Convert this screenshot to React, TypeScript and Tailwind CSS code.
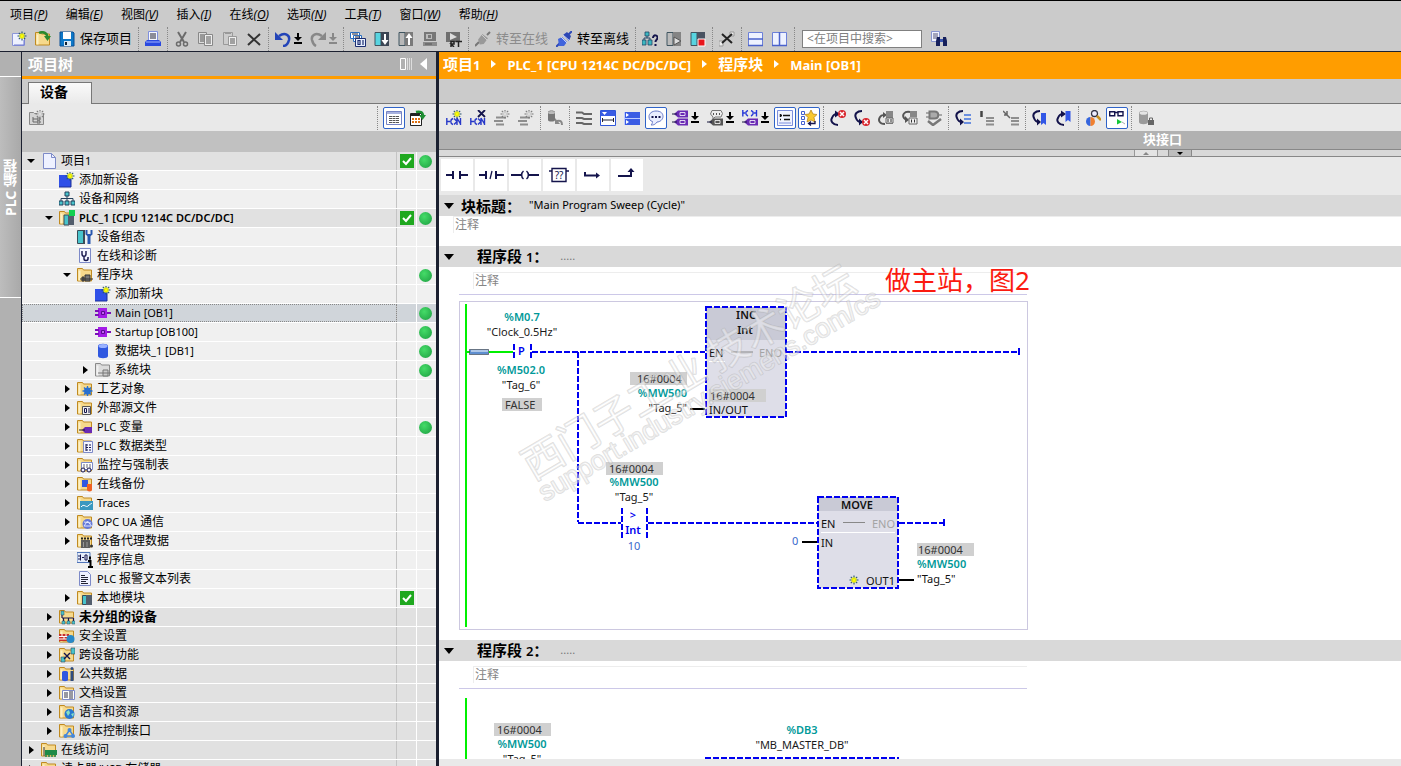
import type { ReactNode } from "react";
import clsx from "clsx";

/* ---------- small shared pieces ---------- */

function Svg({ children, size = 16 }: { children: ReactNode; size?: number }) {
  return (
    <svg width={size} height={size} viewBox="0 0 16 16" fill="none" className="block shrink-0" aria-hidden="true">
      {children}
    </svg>
  );
}

function Spark({ x, y, gray }: { x: number; y: number; gray?: boolean }) {
  return (
    <g transform={`translate(${x} ${y})`}>
      <path d="M0-4.5V4.5M-4.5 0H4.5M-3.2-3.2 3.2 3.2M3.2-3.2-3.2 3.2" stroke={gray ? "#777" : "#24506e"} strokeWidth="1.1" />
      <path d="M0-3V3M-3 0H3M-2.2-2.2 2.2 2.2M2.2-2.2-2.2 2.2" stroke={gray ? "#ddd" : "#ff0"} strokeWidth="1.1" />
    </g>
  );
}

function Folder({ gray, children }: { gray?: boolean; children?: ReactNode }) {
  return (
    <Svg>
      <path d="M.5 1.500h5l1 1.500h8v11H.5z" fill={gray ? "#dcdcdc" : "#f6d98c"} stroke={gray ? "#8a8a8a" : "#c08a20"} />
      <path d="M1.500 3.500h2v10h-2z" fill={gray ? "#f2f2f2" : "#fdf0c4"} />
      {children}
    </Svg>
  );
}

function Split({ text, latin }: { text: string; latin: string }) {
  return (
    <>
      {text.split(/([\u0021-\u007e][\u0020-\u007e]*)/).map((part, i) => (
        <span key={i} className={i % 2 ? latin : undefined}>{part}</span>
      ))}
    </>
  );
}

/* ---------- tool bar icons ---------- */

const contactPair = (
  <path d="M.8 8v7M1 11.500h3M7 8.500c-3 1-3 5 0 6M8 8.500l3 3-3 3M11 8v7M14.500 8v7M11 8l3.500 6" stroke="#2738c8" strokeWidth="1.400" />
);
const grayLines = <path d="M2 7.500h10M0 11h9M2 14.500h8" stroke="#8e8e8e" strokeWidth="2" />;
const curveDown = <path d="M8 1C3 1 0 4 2 8c1 3 3 4 5 4" stroke="#12124a" strokeWidth="2" />;
const jumpDown = (
  <>
    {curveDown}
    <path d="M5 8.500v7l4-3.500z" fill="#12124a" />
  </>
);
const jumpUp = (
  <>
    <path d="M8 15C3 15 0 11 2 8c1-3 3-4 5-4" stroke="#12124a" strokeWidth="2" />
    <path d="M5 .5v7L10 4z" fill="#12124a" />
  </>
);
const redCross = (x: number, y: number) => (
  <g transform={`translate(${x} ${y})`}>
    <circle r="4" fill="#d8242c" />
    <path d="M-2-2 2 2M2-2-2 2" stroke="#fff" strokeWidth="1.5" />
  </g>
);
const tagShape = (y: number, color: string) => (
  <>
    <path d={`M2 ${y}l4-3.500h10v7H6z`} fill={color} />
    <path d={`M0 ${y}h5`} stroke="#1a1a40" />
    <path d={`M8 ${y - 1.500}h5v3H8z`} stroke="#fff" strokeWidth=".8" />
  </>
);
const device = (x: number, light: string, dark: string) => (
  <>
    <path d={`M${x} 1.500h6v13H${x}z`} fill={light} stroke="#3f5560" />
    <path d={`M${x + 6} 1h8v14h-8z`} fill={dark} />
  </>
);

const icons: Record<string, ReactNode> = {
  new: (
    <Svg>
      <path d="M1.500 2.500h9l3 2v10h-12z" fill="#eef1ff" stroke="#8c96d8" />
      <path d="M13 9v5H3" stroke="#6f79d0" />
      <Spark x={11} y={5} />
    </Svg>
  ),
  open: (
    <Folder>
      <path d="M4 2c4-2 8 0 8.500 4" stroke="#2c8a2c" strokeWidth="2.500" />
      <path d="M9 5h7l-3.500 5z" fill="#2c8a2c" />
    </Folder>
  ),
  save: (
    <Svg>
      <path d="M1 1h13l1 1v13H1z" fill="#0d78c8" stroke="#0b4f94" />
      <path d="M4 1h8v7H4z" fill="#fff" />
      <path d="M5 10h7v5H5z" fill="#d7e8f5" />
      <path d="M6 11h2v3H6z" fill="#123" />
    </Svg>
  ),
  print: (
    <Svg>
      <path d="M3.500.5h9v9h-9z" fill="#f6f8ff" stroke="#8090dd" />
      <path d="M5 3h6M5 5h6M5 7h6" stroke="#223" />
      <path d="M0 11l2-2h12l2 2v4H0z" fill="#2a49e0" />
      <path d="M1 11h14" stroke="#9fb2ff" />
    </Svg>
  ),
  cut: (
    <Svg>
      <path d="M4 1l6 10M12 1L6 11" stroke="#6b6b6b" strokeWidth="2" />
      <circle cx="4.500" cy="13" r="2" stroke="#6b6b6b" strokeWidth="1.500" />
      <circle cx="11.500" cy="13" r="2" stroke="#6b6b6b" strokeWidth="1.500" />
    </Svg>
  ),
  copy: (
    <Svg>
      <path d="M.5 1.500h8v11h-8z" fill="#ddd" stroke="#888" />
      <path d="M6.500 3.500h8v11h-8z" fill="#eee" stroke="#888" />
      <path d="M2 4h4M2 6h4M2 8h4M2 10h4M8 6h5M8 8h5M8 10h5M8 12h5" stroke="#555" />
    </Svg>
  ),
  paste: (
    <Svg>
      <path d="M1.500 1.500h9v12h-9z" fill="#ccc" stroke="#999" />
      <path d="M3 1h6v2H3z" fill="#999" />
      <path d="M6.500 5.500h8v9h-8z" fill="#eee" stroke="#999" />
      <path d="M8 8h5M8 10h5M8 12h5" stroke="#555" />
    </Svg>
  ),
  remove: <Svg><path d="M2 3l12 11M14 3L2 14" stroke="#333" strokeWidth="2" /></Svg>,
  undo: (
    <Svg>
      <path d="M4 5c6-4 11-1 10 4-1 4-3 6-6 6" stroke="#2344b8" strokeWidth="2.500" />
      <path d="M0 1v8h8z" fill="#2344b8" />
    </Svg>
  ),
  redo: (
    <Svg>
      <path d="M12 5C6 1 1 4 2 9c1 4 2 5 4 6" stroke="#888" strokeWidth="2.500" />
      <path d="M16 1v8H8z" fill="#888" />
    </Svg>
  ),
  compile: (
    <Svg>
      <path d="M.5 1.500h9v6h-9zM3.500 4.500h8v6h-8z" fill="#fff" stroke="#2a6ec0" />
      <path d="M2 3h6M5 6h5" stroke="#223" />
      <path d="M5.500 7.500h10v8h-10z" fill="#e8f0ff" stroke="#1b2d70" />
      <path d="M8 9.500h2v4H8zM13 9v5" stroke="#1b2d70" strokeWidth="1.200" />
    </Svg>
  ),
  download: <Svg>{device(1, "#58d4e0", "#3c4654")}<path d="M11 3v8" stroke="#fff" strokeWidth="2" /><path d="M7.500 9h7L11 14z" fill="#fff" /></Svg>,
  upload: <Svg>{device(1, "#b8b8b8", "#7a7a7a")}<path d="M11 6v8" stroke="#fff" strokeWidth="2" /><path d="M7.500 7h7L11 2z" fill="#fff" /></Svg>,
  simulate: (
    <Svg>
      <path d="M2 1h12v9H2z" fill="#777" />
      <path d="M4 3h6v5H4z" fill="#bbb" />
      <path d="M6 4h3v3H6z" fill="#777" />
      <path d="M1 11h14v4H1z" fill="#8b8b8b" />
      <path d="M3 13h7" stroke="#555" />
    </Svg>
  ),
  runtime: (
    <Svg>
      <path d="M0 1h14v10H0z" fill="#6f6f6f" />
      <path d="M4 2l7 4-7 3z" fill="#ddd" />
      <path d="M5 16v-5.500h3v2.500H5l3 3M9.500 10.500H16M12.500 10v6" stroke="#222" strokeWidth="1.500" />
    </Svg>
  ),
  plugGray: (
    <Svg>
      <path d="M0 15l4-4M12 4l3-3" stroke="#777" strokeWidth="2" />
      <path d="M3 8l5-5 5 5-5 5H4z" fill="#999" transform="rotate(-8 8 8)" />
      <path d="M6 3l7 7" stroke="#ccc" />
    </Svg>
  ),
  plug: (
    <Svg>
      <path d="M0 16l4-4M12 4l4-4" stroke="#2d48b8" strokeWidth="2" />
      <path d="M2 8l4-2 5 5-3 4H3z" fill="#4164dc" />
      <path d="M7 4l4-3 4 4-2 5z" fill="#2c46b4" />
      <path d="M5 6l6 6M7 4l7 6" stroke="#c4d2ff" />
    </Svg>
  ),
  accessible: (
    <Svg>
      <path d="M3 1h4v4H3zM0 9h4v5H0zM6 9h4v5H6z" fill="#3cb8c0" stroke="#246" strokeWidth=".8" />
      <path d="M5 5v2M2 9V7h6v2" stroke="#246" />
      <path d="M11 7c0-4 5-3 4.500 0-.3 2-2 2-2 4M13.500 13v2" stroke="#14144c" strokeWidth="2" />
    </Svg>
  ),
  start: <Svg>{device(1, "#bbb", "#848484")}<path d="M8 6l7 4-7 4z" fill="#ddd" stroke="#555" /></Svg>,
  stop: <Svg>{device(1, "#58d4e0", "#4a5362")}<path d="M8 8h7v7H8z" fill="#e8161c" stroke="#fff" /></Svg>,
  crossRef: (
    <Svg>
      <path d="M0 10h4v5H0zM11 1h4v4h-4z" fill="#eee" stroke="#999" />
      <path d="M3 3l10 9M13 3L3 12" stroke="#222" strokeWidth="2" />
    </Svg>
  ),
  splitH: <Svg><path d="M.5 1.500h14v13H.5z" fill="#eef2ff" stroke="#6c80d8" /><path d="M0 8h15M0 14.500h15" stroke="#4a62cc" strokeWidth="1.500" /></Svg>,
  splitV: <Svg><path d="M.5 1.500h14v13H.5z" fill="#eef2ff" stroke="#6c80d8" /><path d="M7.500 1v14M0 14.500h15" stroke="#4a62cc" strokeWidth="1.500" /></Svg>,
  find: (
    <Svg>
      <path d="M.5.5h8v10h-8z" fill="#f2f4ff" stroke="#8a96d0" />
      <path d="M2 3h5M2 5h5M2 7h4" stroke="#557" />
      <path d="M6 6h3v9H5v-5zM12 6h3l1 4v5h-4z" fill="#16205c" />
      <path d="M9 8h3v3H9z" fill="#3a56b0" />
    </Svg>
  ),

  insertNetwork: <Svg>{contactPair}<Spark x={11} y={4} /></Svg>,
  deleteNetwork: <Svg>{contactPair}<path d="M8 0l7 7M15 0L8 7" stroke="#14144c" strokeWidth="1.800" /></Svg>,
  rowGray: <Svg>{grayLines}<Spark x={11} y={4} gray /></Svg>,
  dbReset: (
    <Svg>
      <path d="M1 2c0-2 7-2 7 0v8c0 2-7 2-7 0z" fill="#777" />
      <ellipse cx="4.500" cy="2.500" rx="3.500" ry="1.500" fill="#bbb" />
      <path d="M10 11c3-1 5 0 5 4" stroke="#888" strokeWidth="2" />
      <path d="M8 8v6h5z" fill="#888" />
    </Svg>
  ),
  levels: <Svg><path d="M0 2.500h6l2 1.500h8M0 8h6l2 1h8M0 13h6l2 1h8" stroke="#666" strokeWidth="2" /></Svg>,
  expandAll: (
    <Svg>
      <path d="M.5 .5h15v15H.5z" fill="#fff" stroke="#3157d8" />
      <path d="M1 1h14v5H1z" fill="#3a5ce4" />
      <path d="M2 2h5L4.500 5z" fill="#fff" />
      <path d="M3 10h10M2.500 8v4M13.500 8v4" stroke="#223" />
    </Svg>
  ),
  collapseAll: (
    <Svg>
      <path d="M0 2h16v6H0zM0 9h16v6H0z" fill="#3a5ce4" />
      <path d="M0 8.500h16M.5 2v13" stroke="#bccaff" />
      <path d="M2 3l3 2-3 2zM2 10l3 2-3 2z" fill="#fff" />
    </Svg>
  ),
  comment: (
    <Svg>
      <path d="M8 1c5 0 7 2.500 7 5.500S12 12 9 12C7 15 5 15 3 15c1-1 1.500-2 1.500-3.500C2 11 1 9 1 6.500 1 3.500 4 1 8 1z" fill="#e9edff" stroke="#6678c8" />
      <path d="M3.500 7h2M7 7h2M10.500 7h2" stroke="#14144c" strokeWidth="2" />
    </Svg>
  ),
  operands: <Svg>{tagShape(4, "#6a2ab4")}{tagShape(12, "#6a2ab4")}</Svg>,
  bubbleTag: (
    <Svg>
      {tagShape(12, "#555")}
      <path d="M5 .5h9l1.500 3L14 7H8l-2 2V7L3.500 4z" fill="#eee" stroke="#777" />
      <path d="M6 4h1M9 4h1M12 4h1" stroke="#222" strokeWidth="1.500" />
    </Svg>
  ),
  contactTag: (
    <Svg>
      <path d="M.8 0v6.500M1 3h2M6 .5c-3 1-3 4 0 5.500M9 .5c3 1 3 4 0 5.500M14.500 0v6.500M12 3h2" stroke="#2738d8" strokeWidth="1.400" />
      {tagShape(12, "#6a2ab4")}
    </Svg>
  ),
  freeForm: (
    <Svg>
      <path d="M.5.5h15v15H.5z" fill="#f1f4ff" stroke="#7d8fdc" />
      <path d="M3 5.500h2M3 9.500h1M6 5.500h7M7 9.500h6M3.500 4v3" stroke="#111" strokeWidth="1.500" />
      <path d="M2 13h12" stroke="#7d8fdc" />
    </Svg>
  ),
  favorites: (
    <Svg>
      <path d="M.5 1.500h3v3h-3zM.5 6.500h3v3h-3zM.5 11.500h3v3h-3z" stroke="#4460d0" />
      <path d="M10 0l2 4 4 .5-3 3 1 4.500-4-2-4 2 1-4.500-3-3L8 4z" fill="#f8c830" stroke="#b07c10" strokeWidth=".7" />
      <path d="M14 11v2.500H8M10 11.500L7.500 13.500l2.500 2" stroke="#14144c" strokeWidth="1.300" />
    </Svg>
  ),
  nextError: <Svg>{jumpUp}{redCross(12, 4)}</Svg>,
  prevError: <Svg>{jumpDown}{redCross(12, 12)}</Svg>,
  blockUp: (
    <Svg>
      <path d="M7 14C1 14 0 10 2 7c1-2 3-2 4-2" stroke="#555" strokeWidth="2" />
      <path d="M5 2v6l4-3z" fill="#555" />
      <path d="M8 1h7v13H8z" fill="#888" />
      <path d="M8 8h7v5H8z" fill="#eee" stroke="#666" /><path d="M10 9v3M13 9v3" stroke="#333" />
    </Svg>
  ),
  blockDown: (
    <Svg>
      <path d="M8 2C2 1 0 5 2 8c1 1 2 2 3 2" stroke="#555" strokeWidth="2" />
      <path d="M3 6v7l4-3z" fill="#555" />
      <path d="M8 1h7v6H8z" fill="#888" />
      <path d="M7 8h8v6H7z" fill="#eee" stroke="#666" /><path d="M9.500 9.500v3M12.500 9.500v3" stroke="#333" />
    </Svg>
  ),
  verify: (
    <Svg>
      <path d="M0 3h3M0 7h3M12 5h4" stroke="#666" />
      <path d="M3.500 1.500h5c5 0 5 7 0 7h-5z" fill="#aaa" stroke="#777" strokeWidth="2" />
      <path d="M2 11l5 4 8-6" stroke="#777" strokeWidth="2.500" />
    </Svg>
  ),
  step: <Svg>{jumpDown}<path d="M9 5h7M9 9h7M9 13h7" stroke="#6b8fe0" strokeWidth="2" /></Svg>,
  stepIn: <Svg><path d="M2.500 1v6" stroke="#444" strokeWidth="2.500" /><path d="M7 8h8M7 11h8M7 14.500h8" stroke="#8e8e8e" strokeWidth="2" /></Svg>,
  stepOut: <Svg><path d="M0 1l7 7M4 1v4H1" stroke="#666" strokeWidth="1.500" /><path d="M8 8h8M8 11h8M8 14.500h8" stroke="#8e8e8e" strokeWidth="2" /></Svg>,
  markDown: <Svg>{jumpDown}<path d="M9 3h5v12l-2.500-2L9 15z" fill="#3257e6" /></Svg>,
  markUp: <Svg>{jumpUp}<path d="M9.500 1h5v11L12 10l-2.500 2z" fill="#3257e6" /></Svg>,
  search: (
    <Svg>
      <path d="M5.500 7a4.500 4.500 0 000 9z" fill="#3565dd" /><path d="M5.500 7a4.500 4.500 0 010 9z" fill="#f08030" />
      <circle cx="9.500" cy="3.500" r="3" fill="#eef" stroke="#334" strokeWidth="1.300" />
      <path d="M12 6l4 4" stroke="#c89020" strokeWidth="2.500" />
    </Svg>
  ),
  monitor: (
    <Svg>
      <path d="M.7 1.700h5v4h-5zM9 1.700h5v4H9zM6 2.500h3" stroke="#14144c" strokeWidth="1.400" />
      <path d="M8 9l5 3-5 2.500z" fill="#14c838" />
      <path d="M13 12l3 2" stroke="#aaa" />
    </Svg>
  ),
  dbLock: (
    <Svg>
      <path d="M1 3c0-3 9-3 9 0v9c0 3-9 3-9 0z" fill="#9a9a9a" />
      <ellipse cx="5.500" cy="3" rx="4" ry="1.800" fill="#e4e4e4" />
      <path d="M10 10h6v5h-6z" fill="#666" /><path d="M11.500 10V8h3v2" stroke="#666" />
    </Svg>
  ),

  addTree: (
    <Svg>
      <path d="M.5 2.500h4l1 1h9v11H.5z" fill="#d4d4d4" stroke="#888" />
      <path d="M4 7v5h3M4 9h3M8 8h3v2H8zM8 11h3v2H8z" stroke="#666" />
      <Spark x={11} y={4} gray />
    </Svg>
  ),
  list: (
    <Svg>
      <path d="M.5 1.500h15v13H.5z" fill="#fff" stroke="#7583c4" />
      <path d="M1 3h14" stroke="#a8b2de" strokeWidth="2" />
      <path d="M3 6.500h10M3 8.500h10M3 10.500h10M3 12.500h10" stroke="#555" strokeDasharray="3 .5" />
    </Svg>
  ),
  exportList: (
    <Svg>
      <path d="M.5 3.500h11v12H.5z" fill="#fff" stroke="#222" />
      <path d="M1 5h9" stroke="#222" strokeWidth="2" />
      <path d="M2 9h8M2 12h8" stroke="#e07010" strokeWidth="2" strokeDasharray="2 1" />
      <path d="M6 2c4-1 7 0 7 4" stroke="#1f9034" strokeWidth="2.500" /><path d="M9 5h7l-3.500 5z" fill="#1f9034" />
    </Svg>
  ),

  /* ---------- tree icons ---------- */
  doc: <Svg><path d="M2.500.5h8l4 4v11h-12z" fill="#eef1ff" stroke="#7d8ac8" /><path d="M10.500.5v4h4" stroke="#7d8ac8" /></Svg>,
  add: <Svg><path d="M0 3h12v12H0z" fill="#2f50e8" /><path d="M0 15h12V4" stroke="#1c2f98" /><Spark x={11} y={4} /></Svg>,
  network: (
    <Svg>
      <path d="M6 1h4v4H6zM0 10h4v4H0zM6 10h4v4H6zM12 10h4v4h-4z" fill="#48c4cc" stroke="#23405c" />
      <path d="M8 5v5M2 10V7.500h12V10" stroke="#23405c" />
    </Svg>
  ),
  plc: (
    <Folder>
      <path d="M5 5h5v10H5z" fill="#48c4cc" stroke="#3a4c58" /><path d="M9 6h6v9H9z" fill="#525d6c" /><path d="M10 0h6v6h-6z" fill="#10d050" />
    </Folder>
  ),
  config: (
    <Svg>
      <path d="M.5 1.500h6v13h-6z" fill="#48c4cc" stroke="#3a4c58" /><path d="M6 1h2v14H6z" fill="#3a4c58" />
      <path d="M12 5v10" stroke="#2858b0" strokeWidth="3" /><path d="M9.500 1v4l2.500 2 2.500-2V1" stroke="#2858b0" strokeWidth="2" />
    </Svg>
  ),
  diag: (
    <Svg>
      <path d="M2.500.5h11v14h-11z" fill="#f3f5ff" stroke="#7d8ac8" />
      <path d="M5 3v3c0 3 4 3 4 0V3M7 8v3c0 2 4 2 4 0" stroke="#14144c" strokeWidth="1.400" /><circle cx="11" cy="10" r="1" fill="#14144c" />
    </Svg>
  ),
  blocks: <Folder><path d="M5 10h2v4H5zM8 8h5v6H8z" fill="#777" stroke="#333" /><path d="M3 12h13" stroke="#333" /></Folder>,
  blocksGray: <Folder gray><path d="M8 8h5v6H8z" fill="#ccc" stroke="#777" /><path d="M3 11h13" stroke="#777" /></Folder>,
  ob: (
    <Svg>
      <path d="M3 3h9v10H3z" fill="#a41ce8" /><path d="M0 6h4M0 10h4M12 8h4" stroke="#7a10b8" strokeWidth="2" />
      <path d="M6.500 6.500h3v3h-3z" fill="#c060f0" stroke="#5a0890" />
    </Svg>
  ),
  db: <Svg><path d="M3 3c0-3 10-3 10 0v10c0 3-10 3-10 0z" fill="#3058e0" /><ellipse cx="8" cy="3" rx="4.500" ry="2" fill="#9ab2ff" /></Svg>,
  techno: <Folder><circle cx="10.500" cy="10" r="2.500" stroke="#2870d0" strokeWidth="2" /><path d="M10.500 5v10M5.500 10h10M7 6.500l7 7M14 6.500l-7 7" stroke="#2870d0" strokeWidth="1.300" /></Folder>,
  external: <Folder><path d="M5.500 6.500h8v8h-8z" fill="#eee" stroke="#555" /><path d="M7.500 8.500h2v4h-2zM12 8v5" stroke="#14144c" /></Folder>,
  tags: <Folder><path d="M5 11l3-3h7v6H8z" fill="#6a2ab4" /><path d="M2 11h6" stroke="#222" /></Folder>,
  types: <Folder><path d="M6.500 3.500h9v11h-9z" fill="#f3f5ff" stroke="#7d8ac8" /><path d="M9 6v7M9 7h2M9 9.500h2M9 12h2M12 7h2M12 9.500h2M12 12h2" stroke="#14144c" /></Folder>,
  watch: <Folder><path d="M4.500 5.500h11v7h-11z" fill="#fff" stroke="#7d8ac8" /><path d="M6 8h8M6 10h8" stroke="#667" strokeDasharray="2 1" /><circle cx="6" cy="13" r="2" fill="#eef" stroke="#14144c" /><circle cx="12" cy="13" r="2" fill="#eef" stroke="#14144c" /></Folder>,
  backup: <Folder><path d="M5 4h6v7H5z" fill="#3058e0" /><path d="M10 8h5v6h-5z" fill="#f06020" /><circle cx="12.500" cy="13" r="2.500" fill="#f06020" /></Folder>,
  traces: <Folder><path d="M3 6h13v9H3z" fill="#3a98c0" /><path d="M4 12c3-4 5 1 7-1s3-2 4-3" stroke="#fff" /></Folder>,
  opc: <Folder><circle cx="10.500" cy="10" r="5" fill="#6478d8" /><path d="M7 12l3.500-5 4 5zM7 8l7 1" stroke="#dfe5ff" /></Folder>,
  proxy: <Folder><path d="M4 7h9v8H4z" fill="#5c5c5c" /><path d="M4 5.500h12" stroke="#222" strokeWidth="2" strokeDasharray="2 1" /><path d="M6.500 9v5M10 9v5" stroke="#999" /><circle cx="14.500" cy="13" r="1.500" fill="#333" /></Folder>,
  info: (
    <Svg>
      <path d="M0 .5h13v10H0z" fill="#e4ecfa" stroke="#4f74b8" /><path d="M1 4h2M1 7h2M3.500 2.500v6M5 5.500h2M8 3v5M8 3h2v5H8" stroke="#14144c" />
      <path d="M13 4.500v3M11 9h2.500v6M11 15h5" stroke="#000" strokeWidth="2" />
    </Svg>
  ),
  text: <Svg><path d="M2.500.5h8l3 3v11h-11z" fill="#eef1ff" stroke="#7d8ac8" /><path d="M4 4.500h4M4 6.500h7M4 8.500h7M4 10.500h5M4 12.500h7" stroke="#223" /></Svg>,
  local: <Folder><path d="M5.500 5.500h4v9h-4z" fill="#48c4cc" stroke="#3a4c58" /><path d="M9 5h6v10H9z" fill="#525d6c" /></Folder>,
  ungrouped: <Folder><path d="M3 9h11M3 5v4M4.500 9v4M9.500 9v4M14.500 9v4" stroke="#14144c" strokeWidth="1.200" /><path d="M2 2h3v4H2zM3 12h3v3H3zM8 12h3v3H8zM13 12h3v3h-3z" fill="#48c4cc" stroke="#345" strokeWidth=".5" /></Folder>,
  security: <Folder><path d="M0 6h10v7H0z" fill="#c83028" /><path d="M0 8.500h10M0 11h10M3 6v2M7 6v2M5 9v2" stroke="#fff" /><circle cx="11.500" cy="11" r="4" fill="#2888c8" /></Folder>,
  cross: <Folder><path d="M12 1h4v6h-4zM2 10h4v5H2z" fill="#48c4cc" stroke="#345" strokeWidth=".6" /><path d="M5 6l6 6M11 6l-6 6" stroke="#14144c" strokeWidth="1.400" /></Folder>,
  common: <Folder><path d="M3 6c0-1.500 6-1.500 6 0v8c0 1.500-6 1.500-6 0z" fill="#3058e0" /><circle cx="13" cy="2.500" r="1.500" fill="#2e4c80" /><path d="M13 5v10" stroke="#2e4c80" strokeWidth="3" /></Folder>,
  docs: <Folder><path d="M3.500 5.500h12v9h-12z" fill="#fff" stroke="#7d8ac8" /><path d="M5 8h4M5 10h4M5 12h4M11 6v8M13 6v8" stroke="#334" /></Folder>,
  lang: <Folder><circle cx="10.500" cy="10" r="5" fill="#2878d0" /><path d="M7 8l3-2 1 3-2 3zM12 10l3-1-1 4z" fill="#88e0c0" /></Folder>,
  version: <Folder><path d="M10.500 7l-4 6h8z" stroke="#4488dd" strokeWidth="1.500" /><circle cx="10.500" cy="7" r="2" fill="#4488dd" /><circle cx="6.500" cy="13" r="2" fill="#4488dd" /><circle cx="14" cy="13" r="2" fill="#4488dd" /></Folder>,
  online: <Folder><path d="M4 8h12v5H4z" fill="#1f8a48" /><path d="M5 13v2M8 13v2M11 13v2M14 13v2" stroke="#1f8a48" strokeWidth="1.500" /><path d="M3 5v9" stroke="#333" /></Folder>,
  reader: <Folder><path d="M4 6h11v9H4z" fill="#88a" /></Folder>,
};

/* ---------- tool bar ---------- */

function Tool({ icon, title, label, muted, active }: { icon: string; title: string; label?: string; muted?: boolean; active?: boolean }) {
  return (
    <button type="button" aria-label={title} className="flex h-6 shrink-0 items-center">
      <span className={clsx("flex items-center justify-center", active ? "mx-px size-[22px] rounded-xs border border-[#2f63c8] bg-white" : "w-6")}>
        {icons[icon]}
      </span>
      {label && <span className={clsx("pr-1 pl-px text-[13px]", muted && "text-[#8c8c8c]")}>{label}</span>}
    </button>
  );
}

function DropTool({ icon, title, muted }: { icon: string; title: string; muted?: boolean }) {
  return (
    <div className="flex h-6 w-[35px] shrink-0 items-center">
      <button type="button" aria-label={title} className="flex w-[23px] justify-center">{icons[icon]}</button>
      <button type="button" aria-label={`${title} ▾`} className={muted ? "text-[#888]" : "text-black"}>
        <svg width="8" height="12" viewBox="0 0 8 12" className="block" aria-hidden="true">
          <path d="M3 0h2v4h3L4 8 0 4h3zM0 9h8v2H0z" fill="currentColor" />
        </svg>
      </button>
    </div>
  );
}

const Sep = () => <span className="mx-0.5 h-6 w-px shrink-0 border-l border-dotted border-[#888]" />;

const menus = [
  ["项目", "P"], ["编辑", "E"], ["视图", "V"], ["插入", "I"], ["在线", "O"], ["选项", "N"], ["工具", "T"], ["窗口", "W"], ["帮助", "H"],
];

function MenuBar() {
  return (
    <nav className="flex h-[25px] items-center gap-[18px] pt-[3px] pl-[10px] text-[12px]">
      {menus.map(([name, key]) => (
        <button type="button" key={key} className="whitespace-nowrap">
          {name}<i>(<u>{key}</u>)</i>
        </button>
      ))}
    </nav>
  );
}

function MainToolbar() {
  return (
    <div className="flex h-[25px] items-center pl-[7px]">
      <Tool icon="new" title="新建项目" />
      <Tool icon="open" title="打开项目" />
      <Tool icon="save" title="保存项目" label="保存项目" />
      <Sep />
      <Tool icon="print" title="打印" />
      <Sep />
      <Tool icon="cut" title="剪切" />
      <Tool icon="copy" title="复制" />
      <Tool icon="paste" title="粘贴" />
      <Tool icon="remove" title="删除" />
      <Sep />
      <DropTool icon="undo" title="撤消" />
      <DropTool icon="redo" title="重做" muted />
      <Sep />
      <Tool icon="compile" title="编译" />
      <Tool icon="download" title="下载到设备" />
      <Tool icon="upload" title="从设备上传" />
      <Tool icon="simulate" title="仿真" />
      <Tool icon="runtime" title="运行系统" />
      <Sep />
      <Tool icon="plugGray" title="转至在线" label="转至在线" muted />
      <Tool icon="plug" title="转至离线" label="转至离线" />
      <Sep />
      <Tool icon="accessible" title="可访问的设备" />
      <Tool icon="start" title="启动 CPU" />
      <Tool icon="stop" title="停止 CPU" />
      <Sep />
      <Tool icon="crossRef" title="交叉引用" />
      <Sep />
      <Tool icon="splitH" title="水平拆分" />
      <Tool icon="splitV" title="垂直拆分" />
      <Sep />
      <input
        aria-label="在项目中搜索"
        placeholder="<在项目中搜索>"
        className="mx-[5px] h-[18px] w-[120px] border border-[#808080] bg-white px-1 text-[12px] placeholder:text-[#808080]"
      />
      <Tool icon="find" title="查找" />
    </div>
  );
}

/* ---------- project tree ---------- */

type Node = { level: number; icon: string; text: string; open?: boolean; closed?: boolean; dark?: boolean; bold?: boolean; check?: boolean; dot?: boolean; selected?: boolean };

const nodes: Node[] = [
  { level: 0, icon: "doc", text: "项目1", open: true, dark: true, check: true, dot: true },
  { level: 1, icon: "add", text: "添加新设备" },
  { level: 1, icon: "network", text: "设备和网络" },
  { level: 1, icon: "plc", text: "PLC_1 [CPU 1214C DC/DC/DC]", open: true, dark: true, bold: true, check: true, dot: true },
  { level: 2, icon: "config", text: "设备组态" },
  { level: 2, icon: "diag", text: "在线和诊断" },
  { level: 2, icon: "blocks", text: "程序块", open: true, dot: true },
  { level: 3, icon: "add", text: "添加新块" },
  { level: 3, icon: "ob", text: "Main [OB1]", dot: true, selected: true },
  { level: 3, icon: "ob", text: "Startup [OB100]", dot: true },
  { level: 3, icon: "db", text: "数据块_1 [DB1]", dot: true },
  { level: 3, icon: "blocksGray", text: "系统块", closed: true, dot: true },
  { level: 2, icon: "techno", text: "工艺对象", closed: true },
  { level: 2, icon: "external", text: "外部源文件", closed: true },
  { level: 2, icon: "tags", text: "PLC 变量", closed: true, dot: true },
  { level: 2, icon: "types", text: "PLC 数据类型", closed: true },
  { level: 2, icon: "watch", text: "监控与强制表", closed: true },
  { level: 2, icon: "backup", text: "在线备份", closed: true },
  { level: 2, icon: "traces", text: "Traces", closed: true },
  { level: 2, icon: "opc", text: "OPC UA 通信", closed: true },
  { level: 2, icon: "proxy", text: "设备代理数据", closed: true },
  { level: 2, icon: "info", text: "程序信息" },
  { level: 2, icon: "text", text: "PLC 报警文本列表" },
  { level: 2, icon: "local", text: "本地模块", closed: true, check: true },
  { level: 1, icon: "ungrouped", text: "未分组的设备", closed: true, dark: true, bold: true },
  { level: 1, icon: "security", text: "安全设置", closed: true, dark: true },
  { level: 1, icon: "cross", text: "跨设备功能", closed: true, dark: true },
  { level: 1, icon: "common", text: "公共数据", closed: true, dark: true },
  { level: 1, icon: "docs", text: "文档设置", closed: true, dark: true },
  { level: 1, icon: "lang", text: "语言和资源", closed: true, dark: true },
  { level: 1, icon: "version", text: "版本控制接口", closed: true, dark: true },
  { level: 0, icon: "online", text: "在线访问", closed: true, dark: true },
  { level: 0, icon: "reader", text: "读卡器/USB 存储器", closed: true, dark: true },
];

const indents = ["pl-1", "pl-[22px]", "pl-[40px]", "pl-[58px]"];

function TreeRow({ node }: { node: Node }) {
  const expandable = node.open || node.closed;
  return (
    <li
      role="treeitem"
      aria-level={node.level + 1}
      aria-expanded={expandable ? !!node.open : undefined}
      aria-selected={!!node.selected}
      className={clsx("flex h-[19px] shrink-0 border-b border-white", node.selected ? "bg-[#d0d5da]" : node.dark ? "bg-[#e1e1e1]" : "bg-[#f0f0f0]")}
    >
      <div className={clsx("flex min-w-0 flex-1 items-center border-r border-[#c4c4c4]", indents[node.level], node.selected && "outline-1 -outline-offset-1 outline-dotted outline-[#888]")}>
        <span className="w-[15px] shrink-0">
          {expandable && (
            <button type="button" aria-label={node.text} className="flex size-[10px] items-center justify-center">
              <svg width="10" height="10" viewBox="0 0 10 10" aria-hidden="true">
                <path d={node.open ? "M1 3h8L5 7z" : "M3 1l5 4-5 4z"} />
              </svg>
            </button>
          )}
        </span>
        {icons[node.icon]}
        <span className={clsx("ml-1 whitespace-pre", node.bold && node.icon !== "plc" ? "text-[13px] font-bold" : "text-[12px]", node.icon === "plc" && "font-semibold")}>
          <Split text={node.text} latin="text-[11px]" />
        </span>
      </div>
      <div className="flex w-5 shrink-0 items-center justify-center border-r border-white">
        {node.check && (
          <svg width="14" height="14" viewBox="0 0 14 14" aria-hidden="true">
            <path d="M0 0h14v14H0z" fill="#1fa81f" />
            <path d="M3 7l3 3 5-6" fill="none" stroke="#fff" strokeWidth="2" />
          </svg>
        )}
      </div>
      <div className="flex w-[19px] shrink-0 items-center pl-0.5">
        {node.dot && <span className="size-[13px] rounded-full bg-radial-[at_40%_35%] from-[#45dc68] to-[#1c9c40]" />}
      </div>
    </li>
  );
}

function ProjectPanel() {
  return (
    <aside className="flex w-[414px] shrink-0 flex-col overflow-hidden">
      <header className="flex h-[27px] shrink-0 items-center justify-between border-b-3 border-[#ff9d00] bg-[#b1b1b1] pr-2 pl-[6px] text-white">
        <h2 className="text-[15px] leading-5 font-bold">项目树</h2>
        <div className="flex items-center gap-2">
          <button type="button" aria-label="布局">
            <svg width="12" height="12" viewBox="0 0 12 12" fill="none" className="block" aria-hidden="true">
              <path d="M.5.5h5v11h-5z" stroke="#fff" />
              <path d="M7.500 0v12M9.500 0v12M11.500 0v12" stroke="#ddd" />
            </svg>
          </button>
          <button type="button" aria-label="折叠">
            <svg width="8" height="12" viewBox="0 0 8 12" className="block" aria-hidden="true"><path d="M7 0v12L0 6z" fill="#fff" /></svg>
          </button>
        </div>
      </header>
      <div className="flex h-[25px] shrink-0 items-end border-b border-[#777] bg-[#cbcbcb] pl-[6px]" role="tablist">
        <button type="button" role="tab" aria-selected="true" className="-mb-px h-[22px] w-16 border border-b-0 border-[#777] bg-linear-to-b from-[#fafafa] to-[#e9e9e9] pr-3 pb-1 text-[14px] leading-4 font-bold">
          设备
        </button>
      </div>
      <div className="flex h-[27px] shrink-0 items-center justify-between bg-[#e9e9e9] pr-1.5 pl-[3px]">
        <Tool icon="addTree" title="新建组" />
        <div className="flex items-center">
          <Sep />
          <span className="w-0.5" />
          <Tool icon="list" title="详细视图" active />
          <Tool icon="exportList" title="导出" />
        </div>
      </div>
      <div className="h-[21px] shrink-0 bg-[#c1c1c1]" />
      <ul role="tree" aria-label="项目树" className="flex min-h-0 flex-1 flex-col overflow-hidden">
        {nodes.map((node) => <TreeRow key={node.text} node={node} />)}
      </ul>
    </aside>
  );
}

/* ---------- block editor ---------- */

function EditorToolbar() {
  return (
    <div className="flex h-[27px] shrink-0 items-center bg-[#e9e9e9] pl-[3px]">
      <Tool icon="insertNetwork" title="插入程序段" />
      <Tool icon="deleteNetwork" title="删除程序段" />
      <Tool icon="rowGray" title="插入行" />
      <Tool icon="rowGray" title="添加行" />
      <Sep />
      <Tool icon="dbReset" title="复位起始值" />
      <Sep />
      <Tool icon="levels" title="打开层级" />
      <Tool icon="expandAll" title="打开所有程序段" />
      <Tool icon="collapseAll" title="关闭所有程序段" />
      <Tool icon="comment" title="启用程序段注释" active />
      <DropTool icon="operands" title="绝对/符号操作数" />
      <DropTool icon="bubbleTag" title="显示变量信息" />
      <DropTool icon="contactTag" title="操作数表示" />
      <Tool icon="freeForm" title="自由格式注释" active />
      <Tool icon="favorites" title="显示收藏" active />
      <Sep />
      <Tool icon="nextError" title="上一个错误" />
      <Tool icon="prevError" title="下一个错误" />
      <Tool icon="blockUp" title="更新块调用" />
      <Tool icon="blockDown" title="更新不一致调用" />
      <Tool icon="verify" title="语法检查" />
      <Sep />
      <Tool icon="step" title="单步" />
      <Tool icon="stepIn" title="单步进入" />
      <Tool icon="stepOut" title="单步跳出" />
      <Sep />
      <Tool icon="markDown" title="下一书签" />
      <Tool icon="markUp" title="上一书签" />
      <Sep />
      <Tool icon="search" title="调用环境" />
      <Tool icon="monitor" title="启用监视" active />
      <Sep />
      <Tool icon="dbLock" title="快照" />
    </div>
  );
}

const favorites: [string, ReactNode][] = [
  ["常开触点", <path key="p" d="M1 8h7M16 8h7M8 4v8M15 4v8" />],
  ["常闭触点", <g key="p"><path d="M0 8h7M17 8h8M7 4v8M17 4v8" /><path d="M11 12l2-8" strokeWidth="1.300" /></g>],
  ["线圈", <g key="p"><path d="M-2 8h11M15 8h11" /><path d="M10.500 4c-2.500 2-2.500 6 0 8M13.500 4c2.500 2 2.500 6 0 8" strokeWidth="1.500" /></g>],
  ["空功能框", <g key="p"><path d="M5 1.500h14v13H5zM2 4h3M19 4h3" strokeWidth="1.400" /><text x="12" y="12" textAnchor="middle" fontSize="10" fill="#14144c" stroke="none">??</text></g>],
  ["打开分支", <g key="p"><path d="M4 5v4M3 8.500h13" /><path d="M15 5.500v6l4-3z" fill="#14144c" strokeWidth="0" /></g>],
  ["嵌套闭合", <g key="p"><path d="M3 9h13.500M16 10V3" /><path d="M12.500 5h7L16 1z" fill="#14144c" strokeWidth="0" /></g>],
];

function SectionBar({ title, children, indent }: { title: string; children?: ReactNode; indent?: boolean }) {
  return (
    <header className="flex h-[21px] shrink-0 items-center bg-[#d9d9d9] pl-1">
      <button type="button" aria-label={title} className={clsx("flex shrink-0 items-center", indent ? "w-[34px]" : "w-[18px]")}>
        <svg width="12" height="8" viewBox="0 0 12 8" aria-hidden="true"><path d="M1 1h10L6 7z" /></svg>
      </button>
      <h3 className="shrink-0 text-[15px] leading-5 font-bold whitespace-pre"><Split text={title} latin="text-[13px] font-semibold" /></h3>
      {children}
    </header>
  );
}

function CommentField({ label, indent }: { label: string; indent?: boolean }) {
  return (
    <div className={clsx(indent ? "ml-5 h-[28px] w-[568px] border-b border-[#ccc8e8] pt-[5px] pl-[14px]" : "h-[20px] pl-[14px]")}>
      <input
        aria-label={label}
        placeholder="注释"
        className="block h-[17px] w-full border-t border-l border-[#ededed] pl-px text-[12px] placeholder:text-[#858585]"
      />
    </div>
  );
}

const blue = "#0000f0";
const teal = "#009999";

function Tag({ x, y, addr, name, anchor = "middle" }: { x: number; y: number; addr: string; name: string; anchor?: "start" | "middle" | "end" }) {
  return (
    <g textAnchor={anchor}>
      <text x={x} y={y} fill={teal} fontWeight="600">{addr}</text>
      <text x={x} y={y + 15}>"{name}"</text>
    </g>
  );
}

function Value({ x, y, w = 57, text, dx = 3 }: { x: number; y: number; w?: number; text: string; dx?: number }) {
  return (
    <>
      <rect x={x} y={y} width={w} height="13" fill="#d0d0d0" />
      <text x={x + dx} y={y + 11} fill="#333">{text}</text>
    </>
  );
}

function LadderOne() {
  return (
    <svg width="569" height="329" viewBox="459 301 569 329" fill="none" className="block font-['Noto_Sans','Noto_Sans_CJK_SC',sans-serif] text-[11px]" role="img" aria-label="程序段 1">
      <rect x="459.500" y="301.500" width="568" height="328" stroke="#ccc8e0" />
      <rect x="465" y="304" width="2" height="323" fill="#00f000" />
      <path d="M467 352h3M489 352h24" stroke="#00f000" strokeWidth="2" />
      <rect x="469.500" y="349.500" width="19" height="5" fill="#5f8fd0" stroke="#222" strokeDasharray="1 1" />
      <path d="M471 351h17" stroke="#fff" />

      <g stroke={blue} strokeWidth="2">
        <path d="M514 344v14M531 344v14" strokeDasharray="6 2" />
        <path d="M532 352h173M787 352h232M578 352v170M578 523h43M648 523h169M899 523h45" strokeDasharray="6 2" />
        <path d="M1019 348v7M944 519v7" />
        <path d="M622 508v30M647 508v30" strokeDasharray="6 2" />
      </g>

      <g fill="#1a1a1a">
        <Tag x={522} y={321} addr="%M0.7" name="Clock_0.5Hz" />
        <Tag x={521} y={374} addr="%M502.0" name="Tag_6" />
        <Value x={502} y={398} w={40} text="FALSE" />
        <text x="518" y="355" fill={blue} fontWeight="600">P</text>

        <Value x={630} y={372} text="16#0004" dx={7} />
        <Tag x={687} y={397} addr="%MW500" name="Tag_5" anchor="end" />
        <Value x={606} y={462} text="16#0004" />
        <Tag x={634} y={486} addr="%MW500" name="Tag_5" />
        <g fill={blue} fontWeight="600" textAnchor="middle">
          <text x="633" y="519">&gt;</text>
          <text x="633" y="534">Int</text>
        </g>
        <text x="634" y="550" fill="#3a68cc" textAnchor="middle">10</text>
        <text x="792" y="545" fill="#3a68cc">0</text>
      </g>
      <path d="M690 409h15M802 542h15M899 580h15" stroke="#000" strokeWidth="2" />

      <g fill="#111">
        <rect x="706" y="307" width="80" height="110" fill="#dedee8" />
        <rect x="706" y="307" width="80" height="33" fill="#c9cad6" />
        <rect x="706" y="307" width="80" height="110" fill="none" stroke={blue} strokeWidth="2" strokeDasharray="6 2" />
        <g fontWeight="600" textAnchor="middle">
          <text x="746" y="319">INC</text>
          <text x="745" y="334">Int</text>
        </g>
        <text x="709" y="357">EN</text>
        <text x="759" y="357" fill="#a4a4a4">ENO</text>
        <path d="M731 352h22" stroke="#888" />
        <path d="M709 361.500h16" stroke="#fff" />
        <Value x={709} y={389} text="16#0004" dx={1} />
        <text x="709" y="414">IN/OUT</text>
      </g>

      <g fill="#111">
        <rect x="818" y="497" width="80" height="91" fill="#dedee8" />
        <rect x="818" y="497" width="80" height="14" fill="#c9cad6" />
        <rect x="818" y="497" width="80" height="91" fill="none" stroke={blue} strokeWidth="2" strokeDasharray="6 2" />
        <text x="857" y="509" fontWeight="600" textAnchor="middle">MOVE</text>
        <text x="821" y="528">EN</text>
        <text x="895" y="528" fill="#a4a4a4" textAnchor="end">ENO</text>
        <path d="M843 522.500h22" stroke="#888" />
        <path d="M821 532.500h74" stroke="#fff" />
        <text x="821" y="547">IN</text>
        <text x="895" y="585" textAnchor="end">OUT1</text>
        <Spark x={854} y={580} />
        <Value x={917} y={543} text="16#0004" dx={1} />
        <Tag x={917} y={568} addr="%MW500" name="Tag_5" anchor="start" />
      </g>
    </svg>
  );
}

function LadderTwo() {
  return (
    <svg width="569" height="70" viewBox="459 689 569 70" fill="none" className="block font-['Noto_Sans','Noto_Sans_CJK_SC',sans-serif] text-[11px]" role="img" aria-label="程序段 2">
      <rect x="465" y="698" width="2" height="61" fill="#00f000" />
      <g fill="#1a1a1a">
        <Value x={494} y={723} text="16#0004" />
        <Tag x={522} y={748} addr="%MW500" name="Tag_5" />
        <Tag x={802} y={734} addr="%DB3" name="MB_MASTER_DB" />
      </g>
      <path d="M705 758h194" stroke={blue} strokeWidth="2" strokeDasharray="6 2" />
    </svg>
  );
}

function Watermark() {
  return (
    <svg width="420" height="290" viewBox="500 240 420 290" className="pointer-events-none absolute top-[83px] left-[61px]" aria-hidden="true">
      <g fill="#fff" fillOpacity=".4" stroke="#a8a8a8" strokeOpacity=".38" strokeWidth="1.500" strokeLinejoin="round" paintOrder="stroke">
        <text transform="translate(533 481) rotate(-30.500)" fontSize="41" className="font-['Noto_Sans_CJK_SC',sans-serif]">西门子工业 技术论坛</text>
        <text transform="translate(545 502) rotate(-30.500)" fontSize="27" className="font-['Liberation_Sans',sans-serif]">support.industry.siemens.com/cs</text>
      </g>
    </svg>
  );
}

const crumbs = ["项目1", "PLC_1 [CPU 1214C DC/DC/DC]", "程序块", "Main [OB1]"];

function Editor() {
  return (
    <main className="flex min-w-0 flex-1 flex-col overflow-hidden bg-white">
      <nav className="flex h-[27px] shrink-0 items-center bg-[#ff9d00] pb-[3px] pl-1 text-[15px] font-bold text-white">
        {crumbs.map((crumb, i) => (
          <span key={crumb} className="flex items-center whitespace-nowrap">
            {i > 0 && (
              <svg width="5" height="8" viewBox="0 0 5 8" className="mx-[11px]" aria-hidden="true"><path d="M0 0l5 4-5 4z" fill="#fff" /></svg>
            )}
            <a href="#"><Split text={crumb} latin="text-[13px]" /></a>
          </span>
        ))}
      </nav>
      <div className="h-[25px] shrink-0 border-b border-[#777] bg-[#cbcbcb]" />
      <EditorToolbar />
      <div className="h-[19px] shrink-0 border-b border-[#888] bg-[#b1b1b1] pl-[704px]">
        <h2 className="text-[13px] leading-[17px] font-bold whitespace-nowrap text-white">块接口</h2>
      </div>
      <div className="flex h-[7px] shrink-0 gap-[10px] border-b border-[#888] bg-[#d9d9d9] pl-[695px]">
        <button type="button" aria-label="向上" className="flex w-6 items-center justify-center border-x border-[#999] bg-[#e4e4e4]">
          <svg width="6" height="3" viewBox="0 0 6 3" aria-hidden="true"><path d="M0 3h6L3 0z" fill="#888" /></svg>
        </button>
        <button type="button" aria-label="向下" className="flex w-6 items-center justify-center border-x border-[#888] bg-[#bdbdbd]">
          <svg width="6" height="3" viewBox="0 0 6 3" aria-hidden="true"><path d="M0 0h6L3 3z" /></svg>
        </button>
      </div>
      <div className="flex h-[38px] shrink-0 gap-0.5 bg-[#e9e9e9] pt-0.5 pl-0.5">
        {favorites.map(([name, drawing]) => (
          <button type="button" key={name} aria-label={name} className="flex size-8 items-center justify-center bg-white">
            <svg width="28" height="16" viewBox="-2 0 28 16" fill="none" stroke="#14144c" strokeWidth="2" aria-hidden="true">{drawing}</svg>
          </button>
        ))}
      </div>

      <div className="min-h-0 flex-1 overflow-hidden">
        <section className="h-[51px]">
          <SectionBar title="块标题：">
            <span className="ml-2 text-[11px]">"Main Program Sweep (Cycle)"</span>
          </SectionBar>
          <CommentField label="块注释" />
        </section>
        <section className="relative">
          <SectionBar title="程序段 1：" indent>
            <span className="ml-3 text-[11px] text-[#777]">.....</span>
          </SectionBar>
          <CommentField label="程序段 1 注释" indent />
          <div className="ml-5 pt-1.5 pb-[10px]"><LadderOne /></div>
          <p className="absolute top-[15px] left-[446px] text-[26px] leading-[38px] whitespace-nowrap text-[#fb1a10]">做主站，图2</p>
          <div className="absolute -top-[89px] left-0"><Watermark /></div>
        </section>
        <section>
          <SectionBar title="程序段 2：" indent>
            <span className="ml-3 text-[11px] text-[#777]">.....</span>
          </SectionBar>
          <CommentField label="程序段 2 注释" indent />
          <div className="ml-5"><LadderTwo /></div>
        </section>
      </div>
      <div className="h-[7px] shrink-0 bg-[#e9e9e9]" />
    </main>
  );
}

export default function App() {
  return (
    <div className="flex h-screen flex-col overflow-hidden border-t border-black bg-[#cbcbcb] font-['Noto_Sans','Noto_Sans_CJK_SC',sans-serif] text-black">
      <MenuBar />
      <MainToolbar />
      <div className="flex min-h-0 flex-1 border-t border-[#1b2030]">
        <div className="flex w-[22px] shrink-0 flex-col border-r border-[#1b2030] bg-[#b1b1b1]">
          <div className="h-[25px] border-b border-white" />
          <button type="button" className="flex h-[221px] items-center justify-center border-b border-white bg-linear-to-r from-[#bdbdbd] to-[#a9a9a9]">
            <span className="rotate-180 text-[14px] font-bold whitespace-nowrap text-white [writing-mode:vertical-rl]">PLC 编程</span>
          </button>
        </div>
        <ProjectPanel />
        <div className="w-[3px] shrink-0 bg-[#1b2030]" />
        <Editor />
      </div>
    </div>
  );
}
